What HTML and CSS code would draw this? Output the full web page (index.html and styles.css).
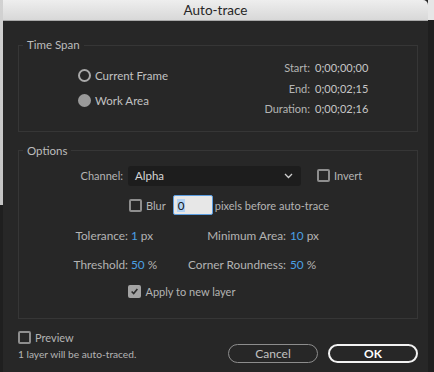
FILE: index.html
```html
<!DOCTYPE html>
<html>
  <head>
    <title>Auto-trace</title>
    <link rel="stylesheet" href="styles.css">
  </head>
  <body>
    <div class="dialog">
      <div class="titlebar">Auto-trace</div>
      <div class="panel">
        <fieldset class="group timespan">
          <legend>Time Span</legend>
          <div class="timespan-body">
            <div class="radios">
              <label class="radio"><span class="radio-dot"></span>Current Frame</label>
              <label class="radio"><span class="radio-dot is-on"></span>Work Area</label>
            </div>
            <div class="times">
              <span class="time-label">Start:</span><span class="time-value">0;00;00;00</span>
              <span class="time-label">End:</span><span class="time-value">0;00;02;15</span>
              <span class="time-label">Duration:</span><span class="time-value">0;00;02;16</span>
            </div>
          </div>
        </fieldset>

        <fieldset class="group options">
          <legend>Options</legend>
          <div class="row channel-row">
            <span class="row-label">Channel:</span>
            <div class="select">
              <span>Alpha</span>
              <svg width="9" height="6" viewBox="0 0 9 6"><path d="M1 1l3.5 3.5L8 1" stroke="#cfcfcf" stroke-width="1.3" fill="none"/></svg>
            </div>
            <label class="check"><span class="box"></span>Invert</label>
          </div>
          <div class="row blur-row">
            <label class="check"><span class="box"></span>Blur</label>
            <div class="num-input"><span class="sel">0</span></div>
            <span>pixels before auto-trace</span>
          </div>
          <div class="params">
            <span class="row-label">Tolerance:</span>
            <span><b class="val">1</b> px</span>
            <span class="row-label">Minimum Area:</span>
            <span><b class="val">10</b> px</span>
            <span class="row-label">Threshold:</span>
            <span><b class="val">50</b> %</span>
            <span class="row-label">Corner Roundness:</span>
            <span><b class="val">50</b> %</span>
          </div>
          <div class="row apply-row">
            <label class="check"><span class="box is-checked"><svg width="11" height="11" viewBox="0 0 11 11"><path d="M2 5.5l2.5 2.5L9 2.5" stroke="#2b2b2b" stroke-width="2" fill="none"/></svg></span>Apply to new layer</label>
          </div>
        </fieldset>

        <div class="footer">
          <div class="footer-info">
            <label class="check"><span class="box"></span>Preview</label>
            <div class="status">1 layer will be auto-traced.</div>
          </div>
          <div class="buttons">
            <button class="btn">Cancel</button>
            <button class="btn btn-ok">OK</button>
          </div>
        </div>
      </div>
    </div>
  </body>
</html>
```

FILE: styles.css
```css
html, body {
    margin: 0;
    padding: 0;
    height: 100%;
}
body {
    font: 11px Lato, "Liberation Sans", sans-serif;
    color: #b4b4b4;
    background:
        linear-gradient(#d2d2d2, #c4c4c4) 0 0 / 3px 205px no-repeat,
        linear-gradient(#e6e6e6, #e6e6e6) right top / 6px 20px no-repeat,
        #1f1f1f;
    overflow: hidden;
}
.dialog {
    margin-left: 3px;
    width: 425px;
    height: 372px;
    background: #272727;
}
.titlebar {
    height: 20px;
    line-height: 21px;
    text-align: center;
    font-size: 13.5px;
    color: #262626;
    background: linear-gradient(#eeeeee, #d8d8d8);
    border-bottom: 1px solid #a9a9a9;
    border-radius: 0 5px 0 0;
}
.panel {
    padding: 17px 10px 0 15px;
}

/* group boxes */
.group {
    margin: 0;
    padding: 0;
    border: 1px solid #363636;
    min-width: 0;
}
.group legend {
    margin-left: 4px;
    padding: 0 4px;
    line-height: 14px;
    font-size: 11.5px;
    color: #bdbdbd;
}

/* time span */
.timespan {
    padding: 6px 0 11px;
}
.timespan-body {
    display: flex;
}
.radios {
    padding: 5px 0 0 59px;
    display: flex;
    flex-direction: column;
}
.radio {
    display: flex;
    align-items: center;
    gap: 4px;
    height: 25px;
    font-size: 11.5px;
    color: #c2c2c2;
}
.radio-dot {
    width: 13px;
    height: 13px;
    box-sizing: border-box;
    border: 2px solid #a9a9a9;
    border-radius: 50%;
}
.radio-dot.is-on {
    border-color: #9a9a9a;
    background: #9a9a9a;
}
.times {
    margin: 0 44px 0 auto;
    display: grid;
    grid-template-columns: auto 58px;
    column-gap: 5px;
    line-height: 20.5px;
}
.time-label {
    text-align: right;
}
.time-value {
    color: #c6c6c6;
}

/* options */
.options {
    margin-top: 12px;
    padding: 8px 0 16px;
}
.row {
    display: flex;
    align-items: center;
    height: 20px;
}
.row-label {
    text-align: right;
}
.channel-row .row-label {
    width: 104px;
    margin-right: 5px;
}
.select {
    width: 173px;
    height: 20px;
    box-sizing: border-box;
    padding: 0 8px 0 7px;
    display: flex;
    align-items: center;
    justify-content: space-between;
    background: #1d1d1d;
    border-radius: 3px;
    color: #d6d6d6;
    font-size: 11.5px;
    margin-right: 16px;
}
.check {
    display: flex;
    align-items: center;
    gap: 4px;
}
.box {
    width: 13px;
    height: 13px;
    box-sizing: border-box;
    border: 2px solid #8e8e8e;
    border-radius: 2px;
    display: flex;
    align-items: center;
    justify-content: center;
}
.box.is-checked {
    background: #a3a3a3;
    border-color: #a3a3a3;
}
.blur-row {
    margin-top: 9.5px;
    padding-left: 110px;
}
.num-input {
    margin: 0 2px 0 7px;
    width: 40px;
    height: 20px;
    box-sizing: border-box;
    padding: 0 3px;
    display: flex;
    align-items: center;
    background: #e7e7e7;
    border: 1.5px solid #5b9de0;
    border-radius: 2px;
    color: #111;
    font-size: 11.5px;
}
.num-input .sel {
    background: #b3d3f4;
    padding: 0 1px;
}
.params {
    margin-top: 10px;
    display: grid;
    grid-template-columns: 109px 40px 113px auto;
    grid-auto-rows: 20px;
    row-gap: 9.3px;
    column-gap: 3px;
    align-items: center;
    font-size: 11.8px;
}
.params .row-label:nth-child(3),
.params .row-label:nth-child(7) {
    margin-right: 1px;
}
.val {
    font-weight: normal;
    color: #4a9fe3;
}
.apply-row {
    margin-top: 7.4px;
    padding-left: 109px;
}
.apply-row .check {
    gap: 4.5px;
}

/* footer */
.footer {
    margin-top: 11.5px;
    display: flex;
    justify-content: space-between;
}
.footer-info .check {
    height: 14px;
}
.status {
    margin-top: 3px;
    line-height: 14px;
    font-size: 10.2px;
}
.buttons {
    margin-top: 14.3px;
    display: flex;
    gap: 10px;
}
.btn {
    width: 90px;
    height: 19px;
    padding: 0;
    box-sizing: border-box;
    border: 1.5px solid #8d8d8d;
    border-radius: 10px;
    background: transparent;
    color: #c2c2c2;
    font: 12px Lato, "Liberation Sans", sans-serif;
}
.btn-ok {
    border: 2px solid #f2f2f2;
    color: #ffffff;
    font-weight: bold;
}
```
